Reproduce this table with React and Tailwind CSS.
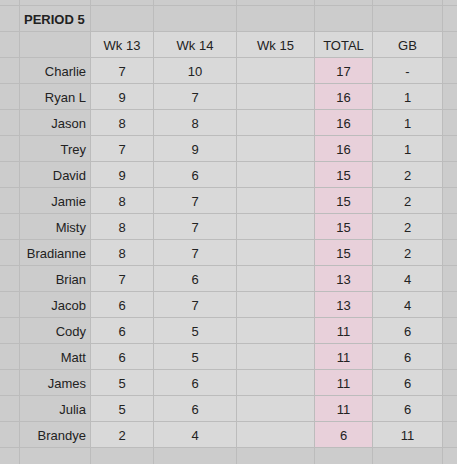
const rows = [
  ['Charlie', '7', '10', '', '17', '-'],
  ['Ryan L', '9', '7', '', '16', '1'],
  ['Jason', '8', '8', '', '16', '1'],
  ['Trey', '7', '9', '', '16', '1'],
  ['David', '9', '6', '', '15', '2'],
  ['Jamie', '8', '7', '', '15', '2'],
  ['Misty', '8', '7', '', '15', '2'],
  ['Bradianne', '8', '7', '', '15', '2'],
  ['Brian', '7', '6', '', '13', '4'],
  ['Jacob', '6', '7', '', '13', '4'],
  ['Cody', '6', '5', '', '11', '6'],
  ['Matt', '6', '5', '', '11', '6'],
  ['James', '5', '6', '', '11', '6'],
  ['Julia', '5', '6', '', '11', '6'],
  ['Brandye', '2', '4', '', '6', '11'],
];

const headers = ['Wk 13', 'Wk 14', 'Wk 15', 'TOTAL', 'GB'];

function Gray() {
  return <div className="bg-[#cccccc]" />;
}

export default function App() {
  return (
    <div
      className="w-[457px] h-[464px] overflow-hidden bg-[#bcbcbc] grid gap-px text-[13px] text-[#222222]"
      style={{ fontFamily: '"Liberation Sans", Arial, sans-serif' }}
    >
      <div className="grid gap-px grid-cols-[19px_70px_62px_82px_77px_57px_69px_14px] grid-rows-[5px_repeat(17,25px)_16px]">
        {/* top partial row */}
        {Array.from({ length: 8 }).map((_, i) => <Gray key={'t' + i} />)}

        {/* period row */}
        <Gray />
        <div className="bg-[#cccccc] flex items-center pt-[3px] pl-1 font-bold">PERIOD 5</div>
        {Array.from({ length: 6 }).map((_, i) => <Gray key={'p' + i} />)}

        {/* header row */}
        <Gray />
        <Gray />
        {headers.map((h) => (
          <div key={h} className="bg-[#d9d9d9] flex items-center justify-center pt-[3px]">
            {h}
          </div>
        ))}
        <Gray />

        {/* data rows */}
        {rows.map((r) => (
          <div key={r[0]} className="contents">
            <Gray />
            <div className="bg-[#cccccc] flex items-center justify-end pt-[3px] pr-1">{r[0]}</div>
            {r.slice(1).map((v, j) => (
              <div
                key={j}
                className={`flex items-center justify-center pt-[3px] ${j === 3 ? 'bg-[#e8d0da]' : 'bg-[#d9d9d9]'}`}
              >
                {v}
              </div>
            ))}
            <Gray />
          </div>
        ))}

        {/* bottom partial row */}
        {Array.from({ length: 8 }).map((_, i) => <Gray key={'b' + i} />)}
      </div>
    </div>
  );
}
